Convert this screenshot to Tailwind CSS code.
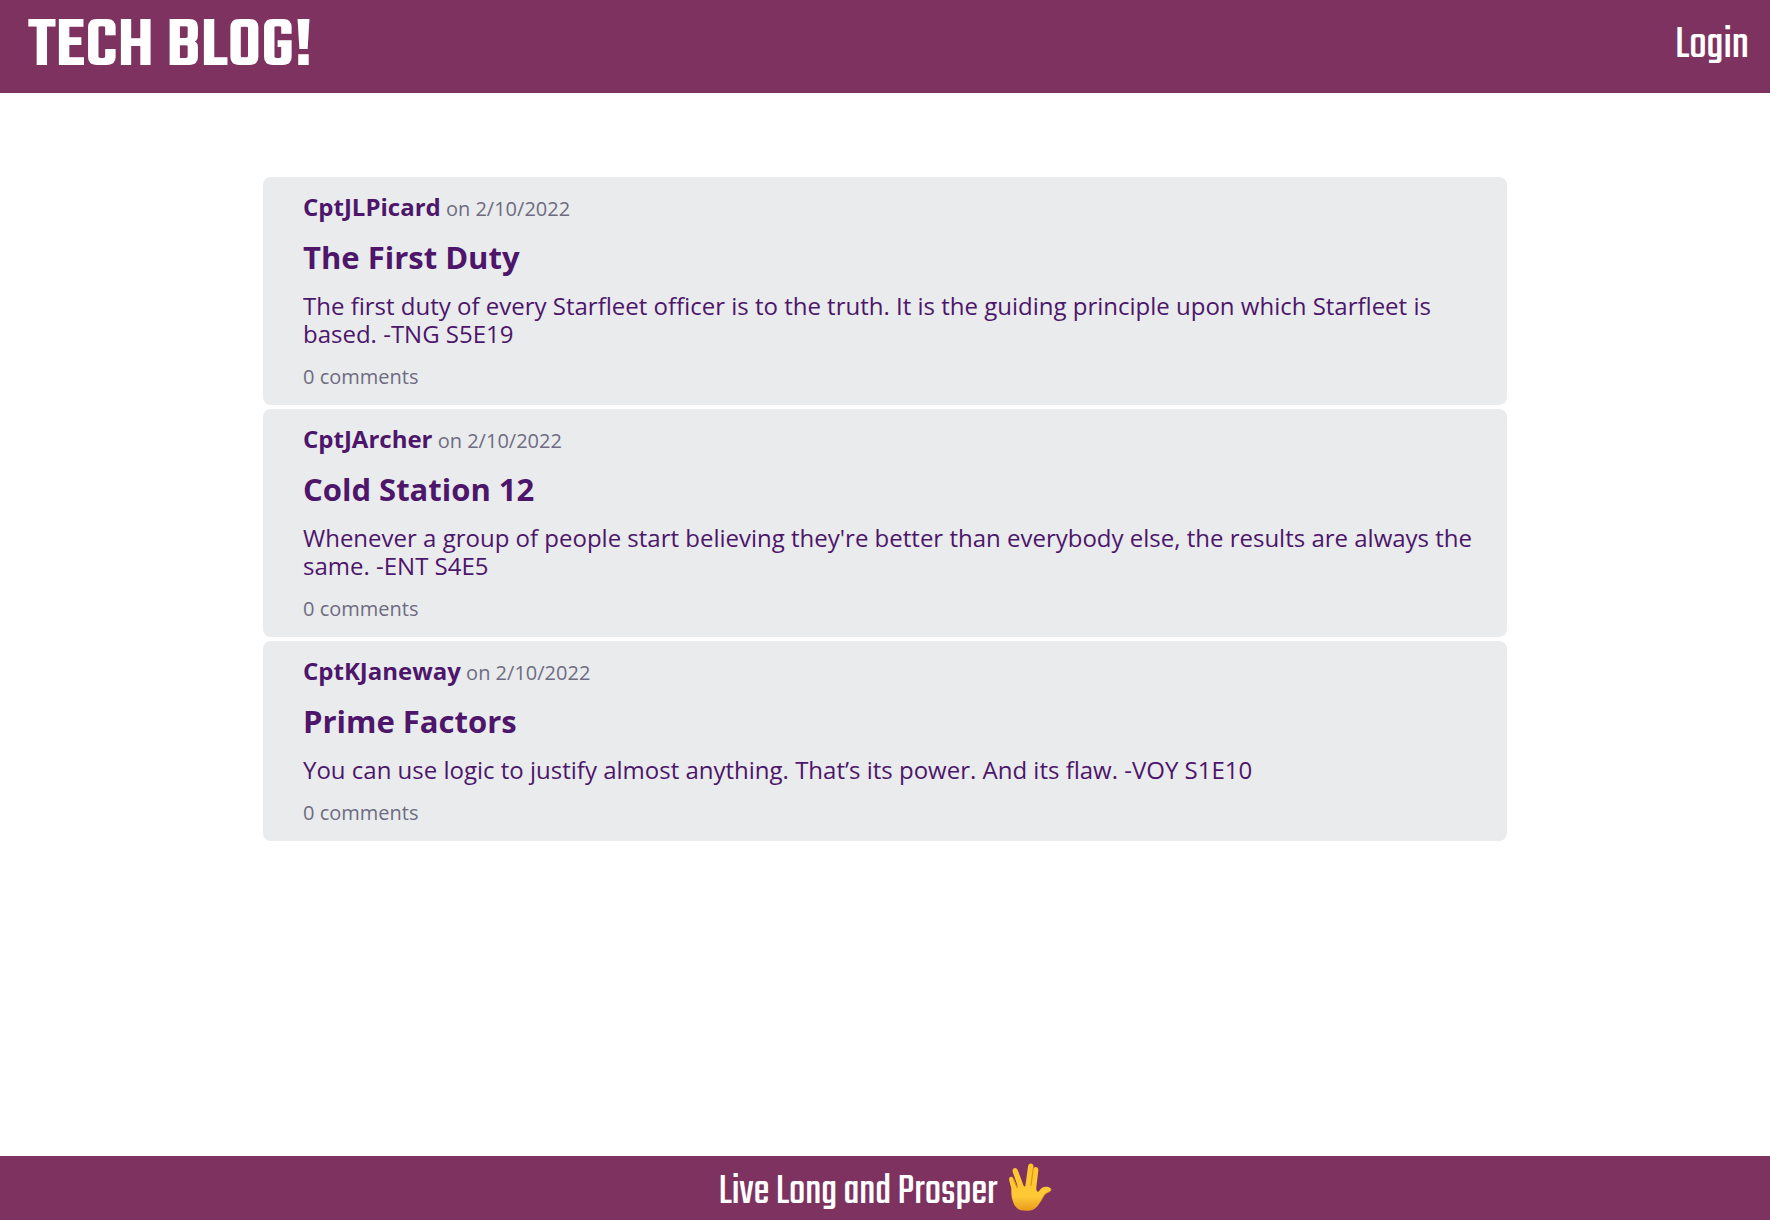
<!DOCTYPE html>
<html lang="en">
<head>
<meta charset="utf-8">
<meta name="viewport" content="width=device-width, initial-scale=1">
<title>Tech Blog</title>
<script src="https://cdn.jsdelivr.net/npm/@tailwindcss/browser@4"></script>
</head>
<body class="flex min-h-screen flex-col bg-white font-['Trebuchet_MS','Open_Sans',sans-serif] text-[#4d166b]">
  <header class="flex items-center justify-between bg-[#7e3260] pt-2.5 pr-[21px] pb-[7px] pl-7 font-['Teko','Liberation_Sans_Narrow','Roboto_Condensed',sans-serif] text-white">
    <h1 class="text-7xl leading-[76px] font-semibold"><a href="#">TECH BLOG!</a></h1>
    <nav class="pb-1"><a href="#" class="block text-[47px] leading-[60px]">Login</a></nav>
  </header>

  <main class="mx-auto mt-21 mb-8 flex w-full max-w-[1244px] flex-1 flex-col gap-1">
    <article class="rounded-lg bg-[#e9ebec] py-4 pr-5 pl-10">
      <p class="text-xl leading-7 text-[#6f6b82]"><a href="#" class="text-2xl leading-7 font-bold text-[#4d166b]">CptJLPicard</a> on 2/10/2022</p>
      <h2 class="mt-3.5 text-[31px] leading-10 font-bold"><a href="#">The First Duty</a></h2>
      <p class="mt-[15px] text-2xl leading-7">The first duty of every Starfleet officer is to the truth. It is the guiding principle upon which Starfleet is based. -TNG S5E19</p>
      <p class="mt-[17px] text-xl leading-6 text-[#6f6b82]"><a href="#">0 comments</a></p>
    </article>
    <article class="rounded-lg bg-[#e9ebec] py-4 pr-5 pl-10">
      <p class="text-xl leading-7 text-[#6f6b82]"><a href="#" class="text-2xl leading-7 font-bold text-[#4d166b]">CptJArcher</a> on 2/10/2022</p>
      <h2 class="mt-3.5 text-[31px] leading-10 font-bold"><a href="#">Cold Station 12</a></h2>
      <p class="mt-[15px] text-2xl leading-7">Whenever a group of people start believing they're better than everybody else, the results are always the same. -ENT S4E5</p>
      <p class="mt-[17px] text-xl leading-6 text-[#6f6b82]"><a href="#">0 comments</a></p>
    </article>
    <article class="rounded-lg bg-[#e9ebec] py-4 pr-5 pl-10">
      <p class="text-xl leading-7 text-[#6f6b82]"><a href="#" class="text-2xl leading-7 font-bold text-[#4d166b]">CptKJaneway</a> on 2/10/2022</p>
      <h2 class="mt-3.5 text-[31px] leading-10 font-bold"><a href="#">Prime Factors</a></h2>
      <p class="mt-[15px] text-2xl leading-7">You can use logic to justify almost anything. That’s its power. And its flaw. -VOY S1E10</p>
      <p class="mt-[17px] text-xl leading-6 text-[#6f6b82]"><a href="#">0 comments</a></p>
    </article>
  </main>

  <footer class="flex h-16 items-center justify-center gap-2.5 bg-[#7e3260] font-['Teko','Liberation_Sans_Narrow','Roboto_Condensed',sans-serif] text-[44px] leading-[52px] text-white">
    <span class="pt-2.5">Live Long and Prosper</span>
    <svg class="mb-0.5 h-[50px] w-11" viewBox="8 12 44 50" role="img" aria-label="Vulcan salute">
      <defs>
        <linearGradient id="skin" x1="0" y1="0" x2="0" y2="1">
          <stop offset="0" stop-color="#ffc62c"/>
          <stop offset=".7" stop-color="#ffc936"/>
          <stop offset="1" stop-color="#e99a1c"/>
        </linearGradient>
      </defs>
      <path fill="url(#skin)" d="M12.500 50 C11 45 11.500 40 11.300 38 L9.200 30.500 C8.400 26.500 12 25.500 13.500 28.800 L16.300 36 C17.300 37.500 17.700 36.500 17.300 35 L12.700 22 C11.700 17.700 16.300 16.600 17.800 20.300 L23.500 35.500 C24.600 37.300 25.300 36.500 25.500 35 L28 16.500 C28.500 12 33.700 12.600 33.500 16.800 L33.300 19 C34 15.700 39 16.500 38.300 20.700 L36.300 37.500 C36 41.500 37.800 43 39.500 40.500 C42.500 36.300 47 36 50.500 38.300 C52.300 39.800 50.500 41.500 48.500 42 C44 43.500 43 47.500 40.500 51.500 C37.500 57 34.500 60.500 28 60.700 L23 60.500 C16.500 60 14 55.500 12.500 50 Z"/>
      <path fill="none" stroke="#dc951a" stroke-width="1.200" stroke-linecap="round" d="M33.200 18.500 L31 35.500 M13.500 29 L17 37.500"/>
      <path fill="none" stroke="#e5a01d" stroke-width="1" stroke-linecap="round" d="M40.500 51.500 C43 47.500 44 43.500 48.500 42 C50.500 41.500 51 40.500 50.800 39.500"/>
    </svg>
  </footer>
</body>
</html>
